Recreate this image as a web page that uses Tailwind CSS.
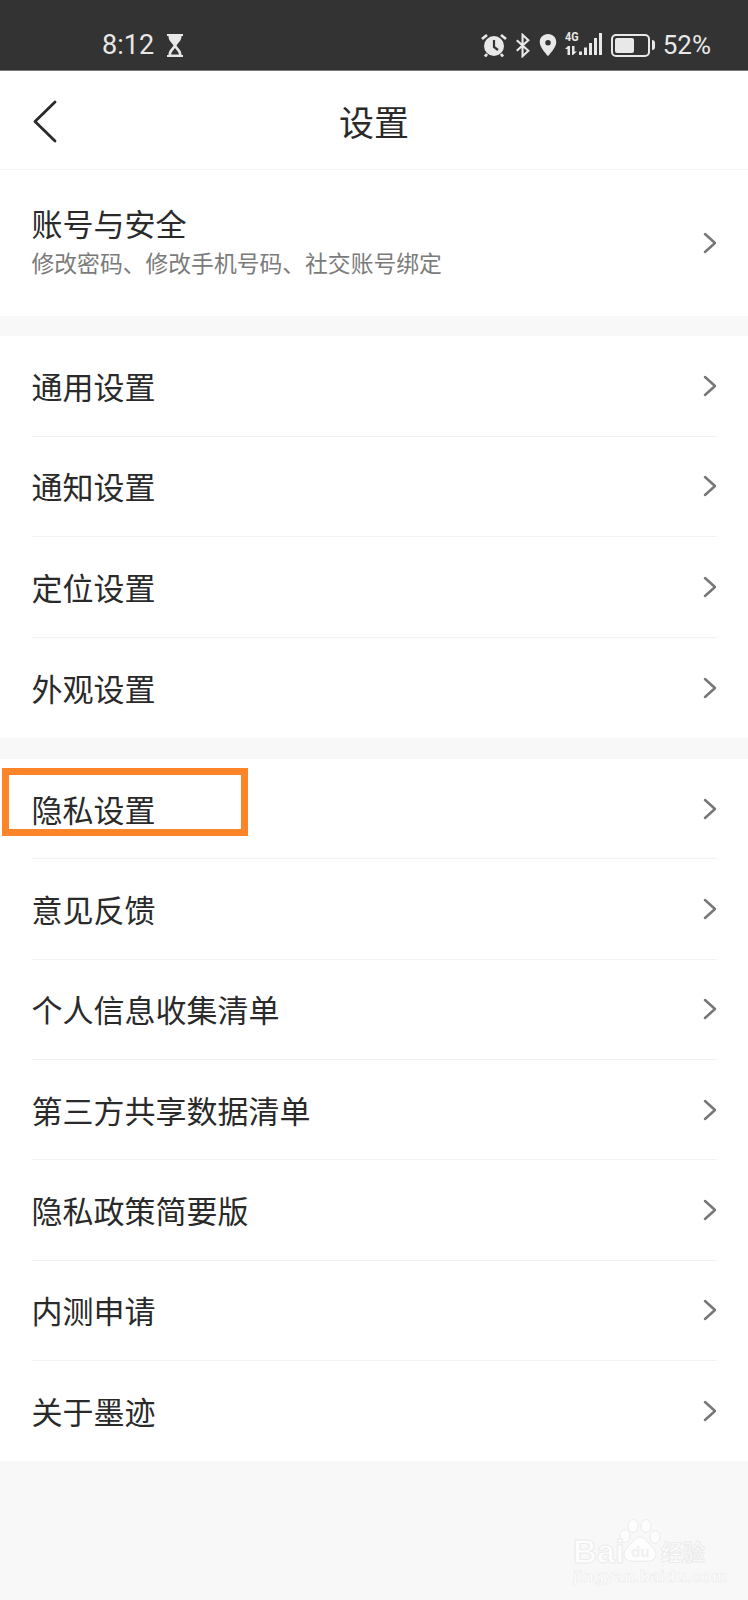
<!DOCTYPE html>
<html lang="zh">
<head>
  <meta charset="UTF-8" />
  <title>设置</title>
  <script src="https://cdn.jsdelivr.net/npm/@tailwindcss/browser@4"></script>
</head>
<body class="bg-[#f8f8f8] text-[#2a2a2a] font-['Noto_Sans_CJK_SC','Noto_Sans',sans-serif]">
<div class="relative w-[748px] h-[1600px] overflow-hidden">

  <!-- Status bar -->
  <div class="h-[71px] bg-[#333333] border-b border-[#777] flex items-end pb-[9px] text-[#e8e8e8] font-['Roboto',sans-serif]">
    <div class="ml-[102px] flex items-center gap-[12px]">
      <span class="text-[27px] leading-[32px]">8:12</span>
      <svg width="18" height="23" viewBox="0 0 18 23" fill="#e8e8e8"><path d="M1 0h16v2h-1.500c0 5-3.500 6.500-5 9.500 1.500 3 5 4.500 5 9.500H17v2H1v-2h1.500c0-5 3.500-6.500 5-9.500C6 8.500 2.500 7 2.500 2H1z"/><path d="M5 20.500c.5-3 2.500-4.500 4-6.500 1.500 2 3.500 3.500 4 6.500z" fill="#333"/></svg>
    </div>
    <div class="ml-auto mr-[37px] flex items-center gap-[8px]">
      <!-- alarm -->
      <svg width="26" height="24" viewBox="0 0 26 24"><circle cx="13" cy="13" r="10" fill="#e8e8e8"/><path d="M13 7v7l4 3" stroke="#333" stroke-width="2.200" fill="none"/><path d="M1 6l5-4M25 6l-5-4M6 21l-2 2.500M20 21l2 2.500" stroke="#e8e8e8" stroke-width="2.800"/></svg>
      <!-- bluetooth -->
      <svg width="16" height="25" viewBox="0 0 18 26" fill="none" stroke="#e8e8e8" stroke-width="2.400"><path d="M2 7l13 12-6.500 6V1L15 7 2 19"/></svg>
      <!-- location -->
      <svg width="18" height="22" viewBox="0 0 19 24"><path fill="#e8e8e8" fill-rule="evenodd" d="M9.500 0C4 0 .500 4 .500 9c0 6 9 15 9 15s9-9 9-15c0-5-3.500-9-9-9zm0 6.500a3 3 0 1 1 0 6 3 3 0 0 1 0-6z"/></svg>
      <!-- 4G signal -->
      <div class="relative w-[38px] h-[24px]">
        <span class="absolute left-0 top-[-2px] text-[12px] leading-[13px] font-bold text-[#e8e8e8] font-['Roboto',sans-serif] scale-x-90 origin-left">4G</span>
        <svg class="absolute inset-0" width="38" height="24" viewBox="0 0 38 24" fill="#e8e8e8"><path d="M0 16l3-3h2V22H2.500v-6zM7 13h2.500v5.500H12L8 22H7zM14 18.500h3V22h-3zM19 14.500h3V22h-3zM24 10h3v12h-3zM29 5h3v17h-3zM34 0h3v22h-3z"/></svg>
      </div>
      <!-- battery -->
      <div class="flex items-center">
        <div class="w-[39px] h-[23px] rounded-[5px] border-2 border-[#e8e8e8] p-[2px]">
          <div class="w-[19px] h-full rounded-[2px] bg-[#e8e8e8]"></div>
        </div>
        <div class="w-[3px] h-[10px] ml-[2px] rounded-r-sm bg-[#e8e8e8]"></div>
      </div>
      <span class="text-[26px] leading-[32px]">52%</span>
    </div>
  </div>

  <!-- Header -->
  <div class="relative h-[99px] bg-white flex items-center justify-center border-b border-[#f6f6f6]">
    <svg class="absolute left-[32px] top-[29px]" width="26" height="44" viewBox="0 0 26 44" fill="none" stroke="#2a2a2a" stroke-width="2.800" stroke-linecap="round" stroke-linejoin="round"><path d="M23 2L3 21.500 23 41"/></svg>
    <span class="text-[35px] leading-[48px] mt-[1px]">设置</span>
  </div>

  <!-- Account -->
  <div class="h-[146px] bg-white flex items-center justify-between pl-[31.500px] pr-[31px]">
    <div class="mt-[-6px]">
      <div class="text-[31px] leading-[42px]">账号与安全</div>
      <div class="mt-[3px] text-[22.800px] leading-[32px] text-[#7b7b7b]">修改密码、修改手机号码、社交账号绑定</div>
    </div>
    <svg width="14" height="22" viewBox="0 0 14 22" fill="none" stroke="#777" stroke-width="2.500" stroke-linecap="round" stroke-linejoin="round"><path d="M2 2l10 9-10 9"/></svg>
  </div>

  <!-- General group -->
  <div class="mt-[20px] bg-white pl-[31.500px] pr-[31px] divide-y divide-[#f3f3f3]">
    <div class="h-[100.600px] flex items-center justify-between">
      <span class="text-[31px] leading-[44px]">通用设置</span>
      <svg width="14" height="22" viewBox="0 0 14 22" fill="none" stroke="#777" stroke-width="2.500" stroke-linecap="round" stroke-linejoin="round"><path d="M2 2l10 9-10 9"/></svg>
    </div>
    <div class="h-[100.600px] flex items-center justify-between">
      <span class="text-[31px] leading-[44px]">通知设置</span>
      <svg width="14" height="22" viewBox="0 0 14 22" fill="none" stroke="#777" stroke-width="2.500" stroke-linecap="round" stroke-linejoin="round"><path d="M2 2l10 9-10 9"/></svg>
    </div>
    <div class="h-[100.600px] flex items-center justify-between">
      <span class="text-[31px] leading-[44px]">定位设置</span>
      <svg width="14" height="22" viewBox="0 0 14 22" fill="none" stroke="#777" stroke-width="2.500" stroke-linecap="round" stroke-linejoin="round"><path d="M2 2l10 9-10 9"/></svg>
    </div>
    <div class="h-[100.600px] flex items-center justify-between">
      <span class="text-[31px] leading-[44px]">外观设置</span>
      <svg width="14" height="22" viewBox="0 0 14 22" fill="none" stroke="#777" stroke-width="2.500" stroke-linecap="round" stroke-linejoin="round"><path d="M2 2l10 9-10 9"/></svg>
    </div>
  </div>

  <!-- Other group -->
  <div class="mt-[20.800px] bg-white pl-[31.500px] pr-[31px] divide-y divide-[#f3f3f3]">
    <div class="h-[100.300px] flex items-center justify-between">
      <span class="text-[31px] leading-[44px]">隐私设置</span>
      <svg width="14" height="22" viewBox="0 0 14 22" fill="none" stroke="#777" stroke-width="2.500" stroke-linecap="round" stroke-linejoin="round"><path d="M2 2l10 9-10 9"/></svg>
    </div>
    <div class="h-[100.300px] flex items-center justify-between">
      <span class="text-[31px] leading-[44px]">意见反馈</span>
      <svg width="14" height="22" viewBox="0 0 14 22" fill="none" stroke="#777" stroke-width="2.500" stroke-linecap="round" stroke-linejoin="round"><path d="M2 2l10 9-10 9"/></svg>
    </div>
    <div class="h-[100.300px] flex items-center justify-between">
      <span class="text-[31px] leading-[44px]">个人信息收集清单</span>
      <svg width="14" height="22" viewBox="0 0 14 22" fill="none" stroke="#777" stroke-width="2.500" stroke-linecap="round" stroke-linejoin="round"><path d="M2 2l10 9-10 9"/></svg>
    </div>
    <div class="h-[100.300px] flex items-center justify-between">
      <span class="text-[31px] leading-[44px]">第三方共享数据清单</span>
      <svg width="14" height="22" viewBox="0 0 14 22" fill="none" stroke="#777" stroke-width="2.500" stroke-linecap="round" stroke-linejoin="round"><path d="M2 2l10 9-10 9"/></svg>
    </div>
    <div class="h-[100.300px] flex items-center justify-between">
      <span class="text-[31px] leading-[44px]">隐私政策简要版</span>
      <svg width="14" height="22" viewBox="0 0 14 22" fill="none" stroke="#777" stroke-width="2.500" stroke-linecap="round" stroke-linejoin="round"><path d="M2 2l10 9-10 9"/></svg>
    </div>
    <div class="h-[100.300px] flex items-center justify-between">
      <span class="text-[31px] leading-[44px]">内测申请</span>
      <svg width="14" height="22" viewBox="0 0 14 22" fill="none" stroke="#777" stroke-width="2.500" stroke-linecap="round" stroke-linejoin="round"><path d="M2 2l10 9-10 9"/></svg>
    </div>
    <div class="h-[100.300px] flex items-center justify-between">
      <span class="text-[31px] leading-[44px]">关于墨迹</span>
      <svg width="14" height="22" viewBox="0 0 14 22" fill="none" stroke="#777" stroke-width="2.500" stroke-linecap="round" stroke-linejoin="round"><path d="M2 2l10 9-10 9"/></svg>
    </div>
  </div>

  <!-- Orange highlight drawn over the row -->
  <div class="absolute left-[2px] top-[768px] w-[246px] h-[68px] border-[7px] border-[#fd8529]"></div>

  <!-- Baidu watermark -->
  <div class="absolute left-[573px] top-[1519px] w-[136px] h-[66px] font-['Liberation_Sans',sans-serif] font-bold text-[#fdfdfd]">
    <svg class="absolute left-[46px] top-0" width="44" height="45" viewBox="0 0 44 45" fill="#fdfdfd" stroke="#ececec" stroke-width="1"><ellipse cx="6" cy="17" rx="5" ry="6.500"/><ellipse cx="14" cy="7" rx="5" ry="6.500"/><ellipse cx="27" cy="7" rx="5" ry="6.500"/><ellipse cx="36" cy="18" rx="5" ry="6.500"/><path d="M21 18c5 0 7 5 11 9 5 4 6 8 4 12-2 3-6 4-15 3-8 1-13 0-15-3-2-4-1-8 4-12 4-4 6-9 11-9z"/></svg>
    <span class="absolute left-0 top-[14px] text-[33px] leading-[38px] [-webkit-text-stroke:1px_#ebebeb]">Bai</span>
    <span class="absolute left-[58px] top-[24px] text-[15px] leading-[18px] text-[#f0f0f0]">du</span>
    <span class="absolute left-[88px] top-[16px] text-[22px] leading-[30px] font-['Noto_Sans_CJK_SC',sans-serif] [-webkit-text-stroke:1px_#ebebeb]">经验</span>
    <span class="absolute left-0 top-[48px] text-[17px] leading-[20px] tracking-[0.300px] whitespace-nowrap [-webkit-text-stroke:0.600px_#ebebeb]">jingyan.baidu.com</span>
  </div>
</div>
</body>
</html>
